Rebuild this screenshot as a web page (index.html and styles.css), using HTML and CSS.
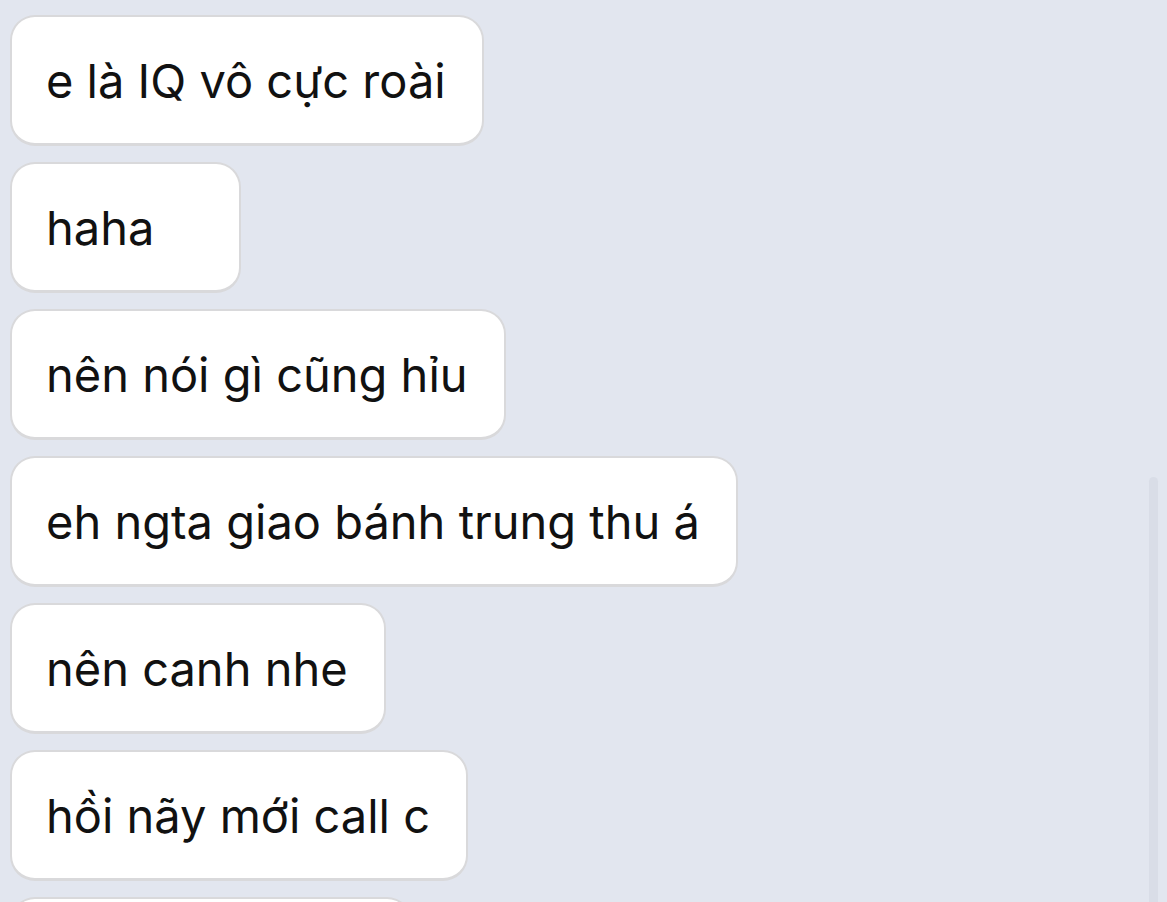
FILE: index.html
```html
<!DOCTYPE html>
<html lang="vi">
<head>
<meta charset="utf-8">
<title>Chat</title>
<link rel="stylesheet" href="styles.css">
</head>
<body>
<div class="chat">
  <div class="messages">
    <div class="bubble">e là IQ vô cực roài</div>
    <div class="bubble">haha</div>
    <div class="bubble">nên nói gì cũng hỉu</div>
    <div class="bubble">eh ngta giao bánh trung thu á</div>
    <div class="bubble">nên canh nhe</div>
    <div class="bubble">hồi nãy mới call c</div>
    <div class="bubble bubble-next"></div>
  </div>
  <div class="scrollbar"></div>
</div>
</body>
</html>
```
FILE: styles.css
```css
html, body {
  margin: 0;
  padding: 0;
  background: #e2e6ef;
}
.chat {
  position: relative;
  height: 902px;
  overflow: hidden;
  font-family: Inter, "Noto Sans", sans-serif;
}
.messages {
  display: flex;
  flex-direction: column;
  align-items: flex-start;
  gap: 16px;
  padding: 15px 0 0 10px;
}
.bubble {
  box-sizing: border-box;
  min-width: 231px;
  background: #ffffff;
  border: 2px solid #d9d9db;
  border-bottom-width: 3px;
  border-radius: 25px;
  padding: 35px 36px 34px 34px;
  font-size: 47px;
  line-height: 57px;
  color: #111111;
  white-space: nowrap;
}
.bubble-next {
  width: 402px;
  height: 131px;
}
.scrollbar {
  position: absolute;
  left: 1149px;
  top: 477px;
  width: 9px;
  height: 440px;
  border-radius: 5px;
  background: #d9dde7;
}
```
